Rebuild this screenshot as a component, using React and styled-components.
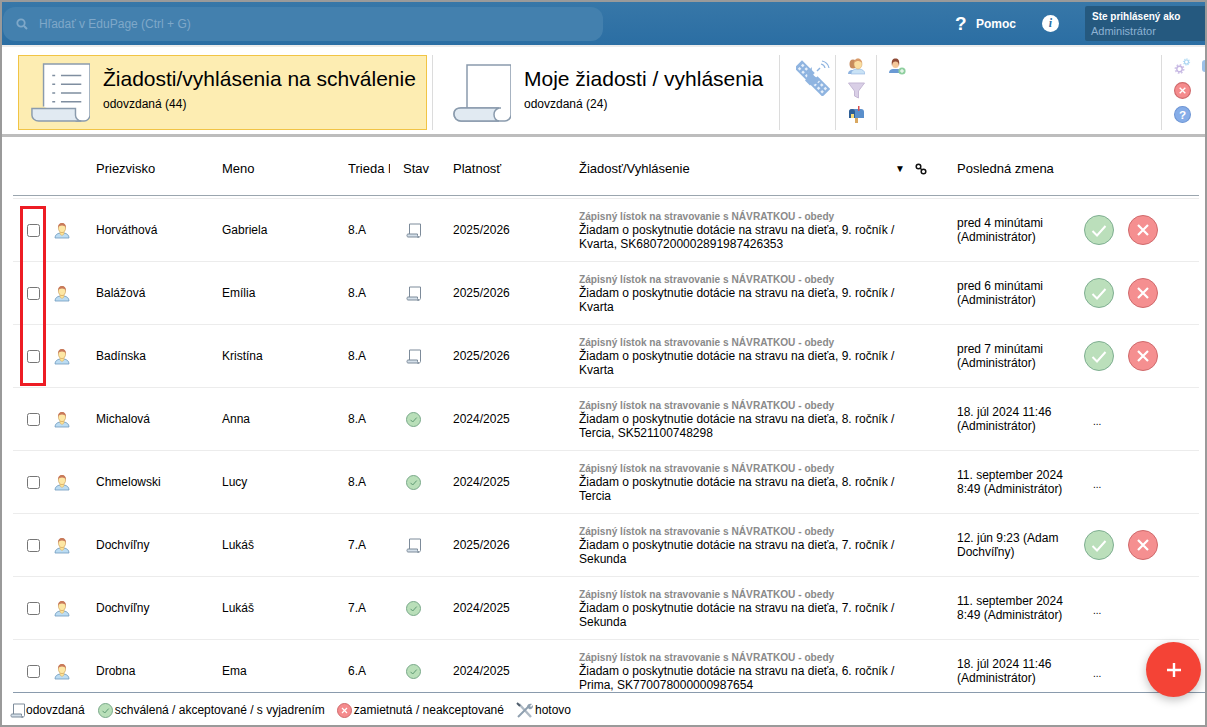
import React from "react";
import styled, { createGlobalStyle } from "styled-components";

const GlobalStyle = createGlobalStyle`
  html, body { margin: 0; padding: 0; background: #fff; }
  body { font-family: "Liberation Sans", Arial, sans-serif; color: #000; }
  * { box-sizing: border-box; }
`;

const Page = styled.div`
  position: relative;
  width: 1207px;
  height: 727px;
  border: 2px solid #9a9a9a;
  overflow: hidden;
  background: #fff;
  display: flex;
  flex-direction: column;
`;

const TopBar = styled.header`
  height: 43px;
  flex: none;
  background: linear-gradient(#3777a8, #2b6ea3);
  display: flex;
  align-items: center;
  padding: 0 0 0 1px;
`;

const SearchBox = styled.div`
  width: 600px;
  height: 34px;
  margin-top: 1px;
  border-radius: 12px;
  background: #4380ae;
  display: flex;
  align-items: center;
  gap: 11px;
  padding-left: 13px;
  color: #7fa8c9;
  font-size: 12px;
`;

const HelpMark = styled.span`
  margin-left: 352px;
  width: 12px;
  color: #fff;
  font-weight: bold;
  font-size: 19px;
`;

const HelpLabel = styled.span`
  margin-left: 9px;
  color: #fff;
  font-weight: bold;
  font-size: 12px;
`;

const InfoDot = styled.span`
  margin-left: 26px;
  width: 17px;
  height: 17px;
  border-radius: 50%;
  background: #fff;
  color: #2b6ea3;
  font: italic bold 12px/17px "Liberation Serif", serif;
  text-align: center;
`;

const UserBox = styled.div`
  margin-left: 26px;
  width: 120px;
  height: 35px;
  background: #25597f;
  border-radius: 2px 0 0 2px;
  padding: 4px 0 0 6px;
  font-size: 11px;
  line-height: 14px;
`;

const UserLabel = styled.div`
  color: #fff;
  font-weight: bold;
  font-size: 10px;
  padding-left: 1px;
`;

const UserName = styled.div`
  color: #8db2d3;
`;

const Toolbar = styled.div`
  height: 92px;
  flex: none;
  background: #fff;
  border-top: 2px solid #ececec;
  border-bottom: 3px solid #bdbdbd;
  display: flex;
  padding: 8px 0 0 16px;
`;

const Tile = styled.div`
  width: ${(p) => p.$w}px;
  height: 75px;
  flex: none;
  display: flex;
  align-items: flex-start;
  background: ${(p) => (p.$active ? "#fdedb2" : "transparent")};
  border: 1px solid ${(p) => (p.$active ? "#f1c445" : "transparent")};
`;

const TileIcon = styled.div`
  width: ${(p) => p.$w}px;
  flex: none;
  padding: ${(p) => p.$pad};
`;

const TileBody = styled.div`
  padding-top: 9px;
`;

const TileTitle = styled.div`
  font-size: 21px;
  line-height: 28px;
  white-space: nowrap;
`;

const TileSub = styled.div`
  font-size: 12px;
  line-height: 14px;
  margin-top: 4px;
`;

const ToolGroup = styled.div`
  width: ${(p) => p.$w}px;
  height: 75px;
  flex: none;
  border-left: 1px solid #dcdcdc;
  margin-left: ${(p) => p.$ml || 0}px;
  padding: ${(p) => p.$pad};
  display: flex;
  flex-direction: column;
  gap: 7px;
`;

const TableArea = styled.div`
  position: relative;
  flex: 1;
  min-height: 0;
  margin: 0 6px 0 11px;
  overflow: hidden;
`;

const Row = styled.div`
  display: grid;
  grid-template-columns: 14px 27px 42px 126px 126px 55px 50px 126px 378px 127px 1fr;
  align-items: center;
  font-size: 12px;
  line-height: 14px;
`;

const HeadRow = styled(Row)`
  height: 59px;
  padding-top: 6px;
  border-bottom: 1px solid #9aa5ae;
  font-size: 13px;
`;

const HeadGap = styled.div`
  height: 3px;
  border-bottom: 1px solid #ececec;
`;

const BodyRow = styled(Row)`
  height: 63px;
  border-bottom: 1px solid #ececec;
`;

const Cell = styled.div`
  grid-column: ${(p) => p.$col};
  white-space: ${(p) => (p.$wrap ? "normal" : "nowrap")};
  min-width: 0;
`;

const ClippedHead = styled(Cell)`
  width: 42px;
  overflow: hidden;
`;

const StateCell = styled(Cell)`
  padding-left: 3px;
`;

const HeadRequest = styled(Cell)`
  display: flex;
  align-items: center;
  padding-right: 30px;
`;

const RequestHeadLabel = styled.span`
  flex: 1;
`;

const SortMark = styled.span`
  font-size: 10px;
  margin-right: 10px;
`;

const Check = styled.span`
  display: block;
  width: 13px;
  height: 13px;
  border: 1px solid #767676;
  border-radius: 2.5px;
  background: #fff;
`;

const RequestType = styled.div`
  color: #8a8a8a;
  font-size: 10.15px;
  font-weight: bold;
  line-height: 13px;
  white-space: nowrap;
`;

const RequestText = styled.div`
  width: 325px;
  line-height: 14px;
`;

const ChangeText = styled.div`
  width: 114px;
`;

const Actions = styled.div`
  display: flex;
  gap: 14px;
`;

const Dots = styled.div`
  padding: 6px 0 0 9px;
  font-size: 10px;
`;

const Highlight = styled.div`
  position: absolute;
  left: 7px;
  top: 69px;
  width: 26px;
  height: 180px;
  border: 3px solid #ed1c24;
  pointer-events: none;
`;

const Legend = styled.footer`
  height: 33px;
  flex: none;
  margin-left: 11px;
  padding-top: 2px;
  border-top: 1px solid #8a9bad;
  display: flex;
  align-items: center;
  font-size: 12px;
`;

const LegendItem = styled.span`
  display: flex;
  align-items: center;
  gap: 2px;
  margin-right: 12px;
  white-space: nowrap;
`;

const LegendFirst = styled(LegendItem)`
  margin-left: -3px;
  gap: 1px;
  margin-right: 13px;
`;

const Fab = styled.button`
  position: absolute;
  left: 1144px;
  top: 640px;
  width: 55px;
  height: 55px;
  padding: 0;
  border: 0;
  border-radius: 50%;
  background: #f44336;
  box-shadow: 0 3px 10px rgba(0, 0, 0, 0.25);
  display: flex;
  align-items: center;
  justify-content: center;
`;

const PartialIcon = styled.div`
  position: absolute;
  right: 0;
  top: 58px;
  width: 3px;
  height: 12px;
  border-radius: 3px 0 0 3px;
  background: #9cc0e8;
`;

const Icon = styled.svg`
  display: block;
`;

const ScrollFilled = () => (
  <Icon width="60" height="60" viewBox="0 0 60 62" fill="none">
    <path d="M13 46V2h48v53c0 3-3 6-6 6H46" fill="#fff" stroke="#8a9bad" strokeWidth="1.5" />
    <path d="M1 48h45v7c0 3 3 6 6 6H8c-4 0-7-3-7-6z" fill="#e1eaf2" stroke="#8a9bad" strokeWidth="1.5" />
    <g stroke="#7f8ea0" strokeWidth="1.5">
      <path d="M22 14h3M31 14h21M22 23h3M31 23h21M22 32h3M31 32h21M22 41h3M31 41h21" />
    </g>
  </Icon>
);

const ScrollEmpty = () => (
  <Icon width="58" height="58" viewBox="0 0 58 58" fill="none">
    <path d="M14 44V1h44v50c0 3-3 6-6 6H8c-4 0-7-3-7-7s3-6 7-6h40" fill="#fff" stroke="#8a9bad" strokeWidth="1.5" />
    <path d="M8 44h38c-3 1-5 3-5 6.500s2 6.500 5 6.500H8c-4 0-7-3-7-7s3-6 7-6z" fill="#e1eaf2" stroke="#8a9bad" strokeWidth="1.5" />
  </Icon>
);

const SmallScroll = () => (
  <Icon width="15" height="15" viewBox="0 0 15 15" fill="none">
    <path d="M3.500 11V1h11v11.500c0 .800-.700 1.500-1.500 1.500H11" fill="#fff" stroke="#7d8b9a" />
    <path d="M1.800 11h9.700v1.500c0 .800.500 1.500 1.500 1.500H1.800c-1.100 0-1.100-3 0-3z" fill="#d5e0ea" stroke="#7d8b9a" />
  </Icon>
);

const Person = () => (
  <Icon width="16" height="17" viewBox="0 0 16 17" fill="none">
    <path d="M1 16c0-3 2-4.500 5-5h4c3 .500 5 2 5 5z" fill="#bcdcf2" stroke="#6f9bbf" strokeWidth=".8" />
    <path d="M6 9h4v3l-2 1.500L6 12z" fill="#fbe39a" stroke="#d8a850" strokeWidth=".5" />
    <ellipse cx="8" cy="6" rx="3.600" ry="4.600" fill="#fde7a4" stroke="#c9974f" strokeWidth=".6" />
    <path d="M4.200 6C3.800 2.500 5.500 1 8 1s4.200 1.500 3.800 5C11.200 4 10 3.400 8 3.400S4.800 4 4.200 6z" fill="#c8795a" />
  </Icon>
);

const OkSmall = () => (
  <Icon width="15" height="15" viewBox="0 0 15 15" fill="none">
    <circle cx="7.500" cy="7.500" r="7" fill="#b9dfb9" stroke="#7aa98a" />
    <path d="M4.500 7.800l2.200 2.200 4-4.400" stroke="#5f9a74" strokeWidth="1" />
  </Icon>
);

const CancelSmall = ({ size = 15 }) => (
  <Icon width={size} height={size} viewBox="0 0 15 15" fill="none">
    <circle cx="7.500" cy="7.500" r="7" fill="#f58b8d" stroke="#cf6a6c" />
    <path d="M5 5l5 5M10 5l-5 5" stroke="#fff" strokeWidth="1.200" />
  </Icon>
);

const ActionOk = () => (
  <Icon width="30" height="30" viewBox="0 0 30 30" fill="none">
    <circle cx="15" cy="15" r="14.500" fill="#bbdfbb" stroke="#7fae91" />
    <path d="M8.500 16l4.500 4.500 8.500-9.500" stroke="#fff" strokeWidth="2" />
  </Icon>
);

const ActionCancel = () => (
  <Icon width="30" height="30" viewBox="0 0 30 30" fill="none">
    <circle cx="15" cy="15" r="14.500" fill="#f58f90" stroke="#cf6a6c" />
    <path d="M10 10l10 10M20 10L10 20" stroke="#fff" strokeWidth="2.200" />
  </Icon>
);

const SatellitePanel = ({ x, y }) => (
  <g transform={`translate(${x} ${y}) rotate(-45)`}>
    <rect x="-5.500" y="-9" width="11" height="18" fill="#8fb4e0" />
    {[-6, -1, 4].map((dy) =>
      [-3.5, 1].map((dx) => <rect key={`${dx}${dy}`} x={dx} y={dy} width="2.500" height="2.500" fill="#e6effa" />)
    )}
  </g>
);

const Satellite = () => (
  <Icon width="34" height="36" viewBox="0 0 34 36" fill="none">
    <SatellitePanel x={8.500} y={10.500} />
    <SatellitePanel x={24} y={26.500} />
    <path d="M12 17l5 5-3 3.500-5-5z" fill="#8fb4e0" />
    <path d="M16 7c-1 5 1 10 8 12 -3 5-7 7-10 5-4-3-4-12 2-17z" fill="#8fb4e0" />
    <path d="M21 11l3-3" stroke="#8fb4e0" strokeWidth="1.500" />
    <path d="M25 4a5 5 0 0 1 4 4M26 1a9 9 0 0 1 7 7" stroke="#8fb4e0" strokeWidth="1.200" />
  </Icon>
);

const People = () => (
  <Icon width="17" height="17" viewBox="0 0 17 17" fill="none">
    <path d="M0 16c0-3 2-4 4-4h3v4z" fill="#8fb4e0" />
    <ellipse cx="5" cy="6" rx="3.500" ry="4.500" fill="#c78a5c" />
    <path d="M3 16c0-3 3-5 5-5h3c3 0 6 2 6 5z" fill="#c9e2f5" stroke="#8fb4e0" strokeWidth=".6" />
    <ellipse cx="10" cy="6" rx="4" ry="5" fill="#fbdda0" stroke="#d0a060" strokeWidth=".5" />
    <path d="M6 5c0-3 2-4.500 4-4.500s4 1.500 4 4.500c-1-1.500-3-2-4-2s-3 .500-4 2z" fill="#d99a6a" />
  </Icon>
);

const Funnel = () => (
  <Icon width="17" height="17" viewBox="0 0 17 17" fill="none">
    <path d="M.500 1h16L10.500 9v7l-4-2V9z" fill="#d9cfe6" stroke="#c4b7d4" />
  </Icon>
);

const Mailbox = () => (
  <Icon width="17" height="17" viewBox="0 0 17 17" fill="none">
    <path d="M7 11h3v6H7z" fill="#d9a860" />
    <path d="M4 3h9c2 0 3 1 3 3v6H1V6c0-2 1-3 3-3z" fill="#5a8fcb" />
    <path d="M1 6c0-2 1-3 3-3s3 1 3 3v6H1z" fill="#2f5f96" />
    <path d="M3 8h3v4H3z" fill="#f4d97a" />
    <path d="M10 0h1.500v5H10z" fill="#d94f4f" />
  </Icon>
);

const AddPerson = () => (
  <Icon width="17" height="17" viewBox="0 0 17 17" fill="none">
    <path d="M0 15c0-3 2-4 4-4h5c2 0 4 1 4 4z" fill="#6a9ad4" />
    <ellipse cx="6.500" cy="5.500" rx="3.500" ry="4.500" fill="#f3c79a" />
    <path d="M3 8C2 2 4 .5 6.500.500S11 2 10 8C9.500 4 8 3.500 6.500 3.500S3.500 4 3 8z" fill="#8e4a36" />
    <circle cx="13" cy="13" r="3.600" fill="#8fcf9f" />
    <path d="M13 11v4M11 13h4" stroke="#fff" />
  </Icon>
);

const Gears = () => (
  <Icon width="17" height="17" viewBox="0 0 17 17" fill="none">
    <circle cx="5.500" cy="11" r="4" stroke="#cfc4e8" strokeWidth="2" strokeDasharray="1.600 1.500" />
    <circle cx="5.500" cy="11" r="2.700" stroke="#c5b6e2" strokeWidth="1.400" />
    <circle cx="12.500" cy="4" r="2.900" stroke="#bfe0f5" strokeWidth="1.500" strokeDasharray="1.200 1" />
    <circle cx="12.500" cy="4" r="2" stroke="#a9d4f2" strokeWidth="1.100" />
  </Icon>
);

const HelpRound = () => (
  <Icon width="17" height="17" viewBox="0 0 16 16" fill="none">
    <circle cx="8" cy="8" r="7.500" fill="#86ade8" stroke="#6f96d4" />
    <text x="8" y="12" textAnchor="middle" fontSize="11" fontWeight="bold" fontFamily="Liberation Sans, sans-serif" fill="#fff">?</text>
  </Icon>
);

const SearchIcon = () => (
  <Icon width="12" height="12" viewBox="0 0 12 12" fill="none">
    <circle cx="5" cy="5" r="3.700" stroke="#7fa8c9" strokeWidth="1.800" />
    <path d="M8 8l3 3" stroke="#7fa8c9" strokeWidth="2" />
  </Icon>
);

const LinkIcon = () => (
  <Icon width="12" height="12" viewBox="0 0 12 12" fill="none">
    <circle cx="3.500" cy="3.500" r="2.300" stroke="#111" strokeWidth="1.500" />
    <circle cx="8.500" cy="8.500" r="2.300" stroke="#111" strokeWidth="1.500" />
    <path d="M5 5l2 2" stroke="#111" strokeWidth="1.500" />
  </Icon>
);

const Tools = () => (
  <Icon width="17" height="17" viewBox="0 0 17 17" fill="none">
    <path d="M3 2l12 13" stroke="#aeb9c4" strokeWidth="2.400" />
    <path d="M1 1l3 3" stroke="#4f5d6b" strokeWidth="2" />
    <path d="M13 4L2 15" stroke="#8fa0b0" strokeWidth="2" />
    <path d="M11 5c0-3 3-4 5-3l-2 2 1 1 2-2c.500 3-2 5-4 4z" fill="#8fa0b0" />
  </Icon>
);

const PlusIcon = () => (
  <Icon width="16" height="16" viewBox="0 0 16 16" fill="none">
    <path d="M8 1v14M1 8h14" stroke="#fff" strokeWidth="2.400" />
  </Icon>
);

const rows = [
  { last: "Horváthová", first: "Gabriela", cls: "8.A", state: "new", year: "2025/2026", text: "Žiadam o poskytnutie dotácie na stravu na dieťa, 9. ročník / Kvarta, SK6807200002891987426353", change: "pred 4 minútami (Administrátor)", act: true },
  { last: "Balážová", first: "Emília", cls: "8.A", state: "new", year: "2025/2026", text: "Žiadam o poskytnutie dotácie na stravu na dieťa, 9. ročník / Kvarta", change: "pred 6 minútami (Administrátor)", act: true },
  { last: "Badínska", first: "Kristína", cls: "8.A", state: "new", year: "2025/2026", text: "Žiadam o poskytnutie dotácie na stravu na dieťa, 9. ročník / Kvarta", change: "pred 7 minútami (Administrátor)", act: true },
  { last: "Michalová", first: "Anna", cls: "8.A", state: "ok", year: "2024/2025", text: "Žiadam o poskytnutie dotácie na stravu na dieťa, 8. ročník / Tercia, SK521100748298", change: "18. júl 2024 11:46 (Administrátor)" },
  { last: "Chmelowski", first: "Lucy", cls: "8.A", state: "ok", year: "2024/2025", text: "Žiadam o poskytnutie dotácie na stravu na dieťa, 8. ročník / Tercia", change: "11. september 2024 8:49 (Administrátor)" },
  { last: "Dochvíľny", first: "Lukáš", cls: "7.A", state: "new", year: "2025/2026", text: "Žiadam o poskytnutie dotácie na stravu na dieťa, 7. ročník / Sekunda", change: "12. jún 9:23 (Adam Dochvíľny)", act: true },
  { last: "Dochvíľny", first: "Lukáš", cls: "7.A", state: "ok", year: "2024/2025", text: "Žiadam o poskytnutie dotácie na stravu na dieťa, 7. ročník / Sekunda", change: "11. september 2024 8:49 (Administrátor)" },
  { last: "Drobna", first: "Ema", cls: "6.A", state: "ok", year: "2024/2025", text: "Žiadam o poskytnutie dotácie na stravu na dieťa, 6. ročník / Prima, SK770078000000987654", change: "18. júl 2024 11:46 (Administrátor)" },
];

function App() {
  return (
    <Page>
      <GlobalStyle />
      <TopBar>
        <SearchBox>
          <SearchIcon />
          Hľadať v EduPage (Ctrl + G)
        </SearchBox>
        <HelpMark>?</HelpMark>
        <HelpLabel>Pomoc</HelpLabel>
        <InfoDot>i</InfoDot>
        <UserBox>
          <UserLabel>Ste prihlásený ako</UserLabel>
          <UserName>Administrátor</UserName>
        </UserBox>
      </TopBar>

      <Toolbar>
        <Tile $active $w={409}>
          <TileIcon $w={84} $pad="6px 0 0 11px">
            <ScrollFilled />
          </TileIcon>
          <TileBody>
            <TileTitle>Žiadosti/vyhlásenia na schválenie</TileTitle>
            <TileSub>odovzdaná (44)</TileSub>
          </TileBody>
        </Tile>
        <ToolGroup $w={1} $ml={5} $pad="0" />
        <Tile $w={346}>
          <TileIcon $w={90} $pad="8px 0 0 19px">
            <ScrollEmpty />
          </TileIcon>
          <TileBody>
            <TileTitle>Moje žiadosti / vyhlásenia</TileTitle>
            <TileSub>odovzdaná (24)</TileSub>
          </TileBody>
        </Tile>
        <ToolGroup $w={56} $pad="5px 0 0 16px">
          <Satellite />
        </ToolGroup>
        <ToolGroup $w={41} $pad="3px 0 0 12px">
          <People />
          <Funnel />
          <Mailbox />
        </ToolGroup>
        <ToolGroup $w={285} $pad="3px 0 0 12px">
          <AddPerson />
        </ToolGroup>
        <ToolGroup $w={30} $pad="3px 0 0 12px">
          <Gears />
          <CancelSmall size={17} />
          <HelpRound />
        </ToolGroup>
      </Toolbar>

      <TableArea>
        <HeadRow>
          <Cell $col={4}>Priezvisko</Cell>
          <Cell $col={5}>Meno</Cell>
          <ClippedHead $col={6}>Trieda Ročník</ClippedHead>
          <Cell $col={7}>Stav</Cell>
          <Cell $col={8}>Platnosť</Cell>
          <HeadRequest $col={9}>
            <RequestHeadLabel>Žiadosť/Vyhlásenie</RequestHeadLabel>
            <SortMark>▼</SortMark>
            <LinkIcon />
          </HeadRequest>
          <Cell $col={10}>Posledná zmena</Cell>
        </HeadRow>
        <HeadGap />
        {rows.map((r, i) => (
          <BodyRow key={i}>
            <Cell $col={2}>
              <Check />
            </Cell>
            <Cell $col={3}>
              <Person />
            </Cell>
            <Cell $col={4}>{r.last}</Cell>
            <Cell $col={5}>{r.first}</Cell>
            <Cell $col={6}>{r.cls}</Cell>
            <StateCell $col={7}>{r.state === "ok" ? <OkSmall /> : <SmallScroll />}</StateCell>
            <Cell $col={8}>{r.year}</Cell>
            <Cell $col={9} $wrap>
              <RequestType>Zápisný lístok na stravovanie s NÁVRATKOU - obedy</RequestType>
              <RequestText>{r.text}</RequestText>
            </Cell>
            <Cell $col={10} $wrap>
              <ChangeText>{r.change}</ChangeText>
            </Cell>
            <Cell $col={11}>
              {r.act ? (
                <Actions>
                  <ActionOk />
                  <ActionCancel />
                </Actions>
              ) : (
                <Dots>...</Dots>
              )}
            </Cell>
          </BodyRow>
        ))}
        <Highlight />
      </TableArea>

      <Legend>
        <LegendFirst>
          <SmallScroll />
          odovzdaná
        </LegendFirst>
        <LegendItem>
          <OkSmall />
          schválená / akceptované / s vyjadrením
        </LegendItem>
        <LegendItem>
          <CancelSmall />
          zamietnutá / neakceptované
        </LegendItem>
        <LegendItem>
          <Tools />
          hotovo
        </LegendItem>
      </Legend>

      <PartialIcon />
      <Fab aria-label="Pridať">
        <PlusIcon />
      </Fab>
    </Page>
  );
}

export default App;
